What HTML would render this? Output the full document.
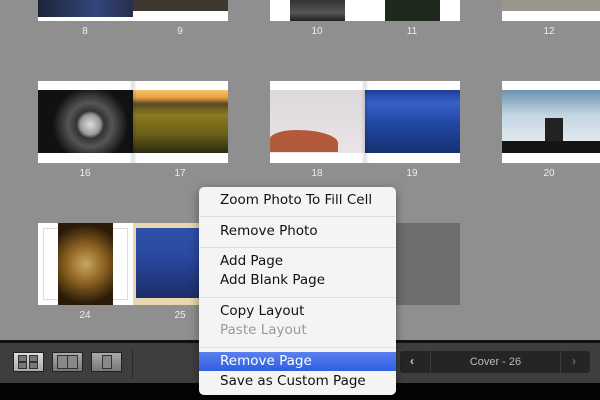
<!DOCTYPE html>
<html><head><style>
*{margin:0;padding:0;box-sizing:border-box}
body{width:600px;height:400px;overflow:hidden;background:#8f8f8f;position:relative;font-family:"Liberation Sans",sans-serif}
.a{position:absolute}
.pg{position:absolute;background:#fff}
.lbl{position:absolute;color:#eee;font-size:10px;width:30px;text-align:center}
.gut{position:absolute;width:8px;background:linear-gradient(90deg,rgba(0,0,0,0),rgba(0,0,0,.12),rgba(0,0,0,0))}
.menu{position:absolute;left:199px;top:187px;width:197px;height:208px;background:#f4f4f4;border-radius:5px;box-shadow:0 3px 10px rgba(0,0,0,.4);font-family:"DejaVu Sans",sans-serif;font-size:13.5px;color:#111}
.mi{position:absolute;left:21px;line-height:19px}
.sep{position:absolute;left:1px;right:1px;height:1px;background:#dcdcdc}
.btn{position:absolute;top:352px;width:31px;height:20px;border:1px solid #222;background:linear-gradient(#aaa,#777)}
</style></head><body>
<div class="pg" style="left:38px;top:0;width:190px;height:21px"></div>
<div class="a" style="left:38px;top:0;width:95px;height:17px;background:linear-gradient(90deg,#1c2438,#34467a 60%,#262f50)"></div>
<div class="a" style="left:133px;top:0;width:95px;height:11px;background:#3e3830"></div>
<div class="pg" style="left:270px;top:0;width:190px;height:21px"></div>
<div class="a" style="left:290px;top:0;width:55px;height:21px;background:linear-gradient(#333,#555 60%,#222)"></div>
<div class="a" style="left:385px;top:0;width:55px;height:21px;background:#1e2a1c"></div>
<div class="pg" style="left:502px;top:0;width:98px;height:21px"></div>
<div class="a" style="left:502px;top:0;width:98px;height:11px;background:#9a968c"></div>
<div class="lbl" style="left:70px;top:26px">8</div><div class="lbl" style="left:165px;top:26px">9</div>
<div class="lbl" style="left:302px;top:26px">10</div><div class="lbl" style="left:397px;top:26px">11</div>
<div class="lbl" style="left:534px;top:26px">12</div>
<div class="pg" style="left:38px;top:81px;width:190px;height:82px"></div>
<div class="a" style="left:38px;top:90px;width:95px;height:63px;background:radial-gradient(circle at 55% 55%,#ddd 0,#999 16%,#333 22%,#555 35%,#111 60%)"></div>
<div class="a" style="left:133px;top:90px;width:95px;height:63px;background:linear-gradient(#f6c46a,#e8a040 12%,#5a4a20 22%,#8a7a20 40%,#6a6018 70%,#2c2a10)"></div>
<div class="gut" style="left:129px;top:81px;height:82px"></div>
<div class="pg" style="left:270px;top:81px;width:190px;height:82px"></div>
<div class="a" style="left:270px;top:90px;width:95px;height:63px;background:linear-gradient(#ddd8dc,#e8e4e8)"></div>
<div class="a" style="left:270px;top:130px;width:68px;height:22px;background:#b35a3a;border-radius:40% 60% 0 0"></div>
<div class="a" style="left:365px;top:90px;width:95px;height:63px;background:linear-gradient(#1f3e9a,#3760c8 20%,#244aa8 50%,#163070)"></div>
<div class="gut" style="left:361px;top:81px;height:82px"></div>
<div class="pg" style="left:502px;top:81px;width:98px;height:82px"></div>
<div class="a" style="left:502px;top:90px;width:98px;height:51px;background:linear-gradient(#6c94b0,#c4d6e2 50%,#e0e8ee)"></div>
<div class="a" style="left:502px;top:141px;width:98px;height:12px;background:#151515"></div>
<div class="a" style="left:545px;top:118px;width:18px;height:23px;background:#222"></div>
<div class="lbl" style="left:70px;top:168px">16</div><div class="lbl" style="left:165px;top:168px">17</div>
<div class="lbl" style="left:302px;top:168px">18</div><div class="lbl" style="left:397px;top:168px">19</div>
<div class="lbl" style="left:534px;top:168px">20</div>
<div class="a" style="left:320px;top:223px;width:140px;height:82px;background:#6e6e6e"></div>
<div class="pg" style="left:38px;top:223px;width:200px;height:82px"></div>
<div class="a" style="left:43px;top:228px;width:85px;height:72px;border:1px solid #ddd"></div>
<div class="a" style="left:58px;top:223px;width:55px;height:82px;background:radial-gradient(circle at 50% 50%,#c9a860,#8a6020 40%,#2a1a08 80%)"></div>
<div class="a" style="left:133px;top:223px;width:105px;height:82px;background:#e8d8b0"></div>
<div class="a" style="left:136px;top:228px;width:100px;height:70px;background:linear-gradient(#3050a8,#2a48a0 40%,#1c2e68)"></div>
<div class="lbl" style="left:70px;top:310px">24</div><div class="lbl" style="left:165px;top:310px">25</div>
<div class="a" style="left:0;top:340px;width:600px;height:3px;background:#111"></div>
<div class="a" style="left:0;top:343px;width:600px;height:40px;background:#3e3e3e"></div>
<div class="a" style="left:0;top:383px;width:600px;height:17px;background:#050505"></div>
<div class="btn" style="left:13px;background:linear-gradient(#ddd,#aaa)">
<svg width="29" height="18" style="position:absolute;left:0;top:0"><g fill="#777" stroke="#333"><rect x="4.5" y="2.5" width="8" height="6"/><rect x="15.5" y="2.5" width="8" height="6"/><rect x="4.5" y="9.5" width="8" height="6"/><rect x="15.5" y="9.5" width="8" height="6"/></g></svg></div>
<div class="btn" style="left:52px"><svg width="29" height="18" style="position:absolute"><rect x="4.5" y="2.5" width="20" height="13" fill="#888" stroke="#333"/><line x1="14.5" y1="2.5" x2="14.5" y2="15.5" stroke="#333"/></svg></div>
<div class="btn" style="left:91px"><svg width="29" height="18" style="position:absolute"><rect x="10.5" y="2.5" width="9" height="13" fill="#888" stroke="#333"/></svg></div>
<div class="a" style="left:132px;top:350px;width:1px;height:28px;background:#2a2a2a"></div>
<div class="a" style="left:400px;top:351px;width:190px;height:22px;background:#252525;border-radius:3px"></div>
<div class="a" style="left:430px;top:351px;width:1px;height:22px;background:#3a3a3a"></div>
<div class="a" style="left:560px;top:351px;width:1px;height:22px;background:#3a3a3a"></div>
<div class="a" style="left:410px;top:354px;color:#ccc;font-size:12px;font-weight:bold">‹</div>
<div class="a" style="left:572px;top:354px;color:#666;font-size:12px;font-weight:bold">›</div>
<div class="a" style="left:431px;top:356px;width:129px;text-align:center;color:#bbb;font-size:11px">Cover - 26</div>
<div class="menu">
<div class="mi" style="top:4px">Zoom Photo To Fill Cell</div>
<div class="sep" style="top:29px"></div>
<div class="mi" style="top:35px">Remove Photo</div>
<div class="sep" style="top:60px"></div>
<div class="mi" style="top:65px">Add Page</div>
<div class="mi" style="top:84px">Add Blank Page</div>
<div class="sep" style="top:110px"></div>
<div class="mi" style="top:115px">Copy Layout</div>
<div class="mi" style="top:134px;color:#999">Paste Layout</div>
<div class="sep" style="top:160px"></div>
<div class="a" style="left:0;top:165px;width:197px;height:19px;background:linear-gradient(#5a80f0,#2f5ee0)"></div>
<div class="mi" style="top:165px;color:#fff">Remove Page</div>
<div class="mi" style="top:185px">Save as Custom Page</div>
</div>
</body></html>
